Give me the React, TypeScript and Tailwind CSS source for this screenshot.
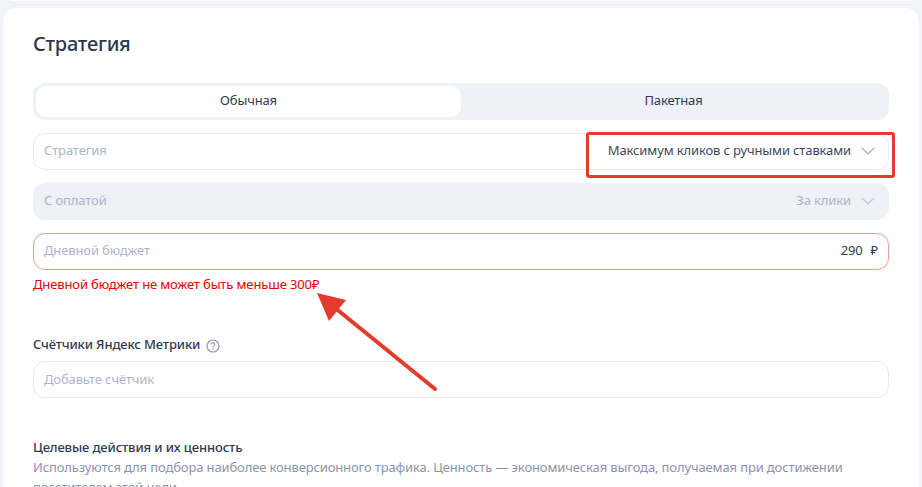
import React from "react";

const Chevron = ({ color }: { color: string }) => (
  <svg width="14" height="8" viewBox="0 0 14 8" fill="none" className="shrink-0">
    <path d="M0.8 1L7 6.8L13.2 1" stroke={color} strokeWidth="1.3" />
  </svg>
);

export default function App() {
  return (
    <div
      className="relative w-[922px] h-[487px] overflow-hidden bg-[#f0f3f8] text-[13px] tracking-[-0.13px] text-[#2f3a52]"
      style={{ fontFamily: '"Noto Sans", sans-serif' }}
    >
      <div className="mx-[10px] h-px bg-white" />
      <div className="mt-[7px] ml-[3px] w-[916px] h-[520px] bg-white rounded-[14px] pl-[30px] pr-[30px]">
        <h2 className="pt-[21px] h-[75px] text-[20px] leading-[30px] tracking-[-0.25px] font-medium text-[#2d3750]">Стратегия</h2>

        <div className="flex h-[37px] rounded-[12px] bg-[#eef1f6] p-[3px]">
          <div className="w-[425px] rounded-[10px] bg-white flex items-center justify-center pb-[2px]">Обычная</div>
          <div className="flex-1 flex items-center justify-center pb-[2px]">Пакетная</div>
        </div>

        <div className="mt-[13px] h-[37px] rounded-[12px] border border-[#e8eaf2] bg-white flex items-center pl-[10px] pr-[13px] pb-[1px] text-[#adb5c9]">
          <span>Стратегия</span>
          <span className="ml-auto mr-[10px] text-[#3d475f]">Максимум кликов с ручными ставками</span>
          <Chevron color="#a9b1c6" />
        </div>

        <div className="mt-[13px] h-[37px] rounded-[12px] bg-[#eef1f6] flex items-center pl-[11px] pr-[14px] pb-[1px] text-[#adb5c9]">
          <span>С оплатой</span>
          <span className="ml-auto mr-[10px]">За клики</span>
          <Chevron color="#c3c9d9" />
        </div>

        <div className="mt-[13px] h-[37px] rounded-[12px] border border-[#f09a96] bg-white flex items-center pl-[10px] pr-[10px] pb-[1px] text-[#adb5c9]">
          <span>Дневной бюджет</span>
          <span className="ml-auto text-[#2f3a52]">290</span>
          <span className="ml-[8px] text-[#2f3a52]">₽</span>
        </div>

        <div className="mt-[5px] h-[18px] leading-[18px] text-[#e60000]">Дневной бюджет не может быть меньше 300₽</div>

        <div className="mt-[42px] h-[20px] flex items-center font-medium text-[#2f3a52]">
          Счётчики Яндекс Метрики
          <svg width="14" height="14" viewBox="0 0 14 14" fill="none" className="ml-[6px] mt-[1px]">
            <circle cx="7" cy="7" r="6" stroke="#8f99b3" strokeWidth="1.2" />
            <path d="M5.2 5.5C5.2 4.5 6 3.9 7 3.9C8 3.9 8.8 4.5 8.8 5.4C8.8 6.6 7 6.7 7 8.2" stroke="#8f99b3" strokeWidth="1.1" />
            <circle cx="7" cy="10" r="0.75" fill="#8f99b3" />
          </svg>
        </div>

        <div className="mt-[6px] h-[37px] rounded-[12px] border border-[#e8eaf2] bg-white flex items-center pl-[10px] text-[#adb5c9]">
          Добавьте счётчик
        </div>

        <div className="mt-[39px] h-[20px] leading-[20px] font-medium text-[#2f3a52]">Целевые действия и их ценность</div>
        <p className="w-[850px] leading-[20px] text-[#8a94ad]">
          Используются для подбора наиболее конверсионного трафика. Ценность — экономическая выгода, получаемая при достижении посетителем этой цели.
        </p>
      </div>

      <div className="absolute left-[586px] top-[132px] w-[309px] h-[46px] rounded-[3px] border-[3px] border-[#e53a2e]" />
      <svg className="absolute left-0 top-0 pointer-events-none" width="922" height="487" viewBox="0 0 922 487" fill="none">
        <path d="M435 389L329 303" stroke="#e53a2e" strokeWidth="4" strokeLinecap="round" />
        <path d="M317 293L346 300L329 321Z" fill="#e53a2e" />
      </svg>
    </div>
  );
}
